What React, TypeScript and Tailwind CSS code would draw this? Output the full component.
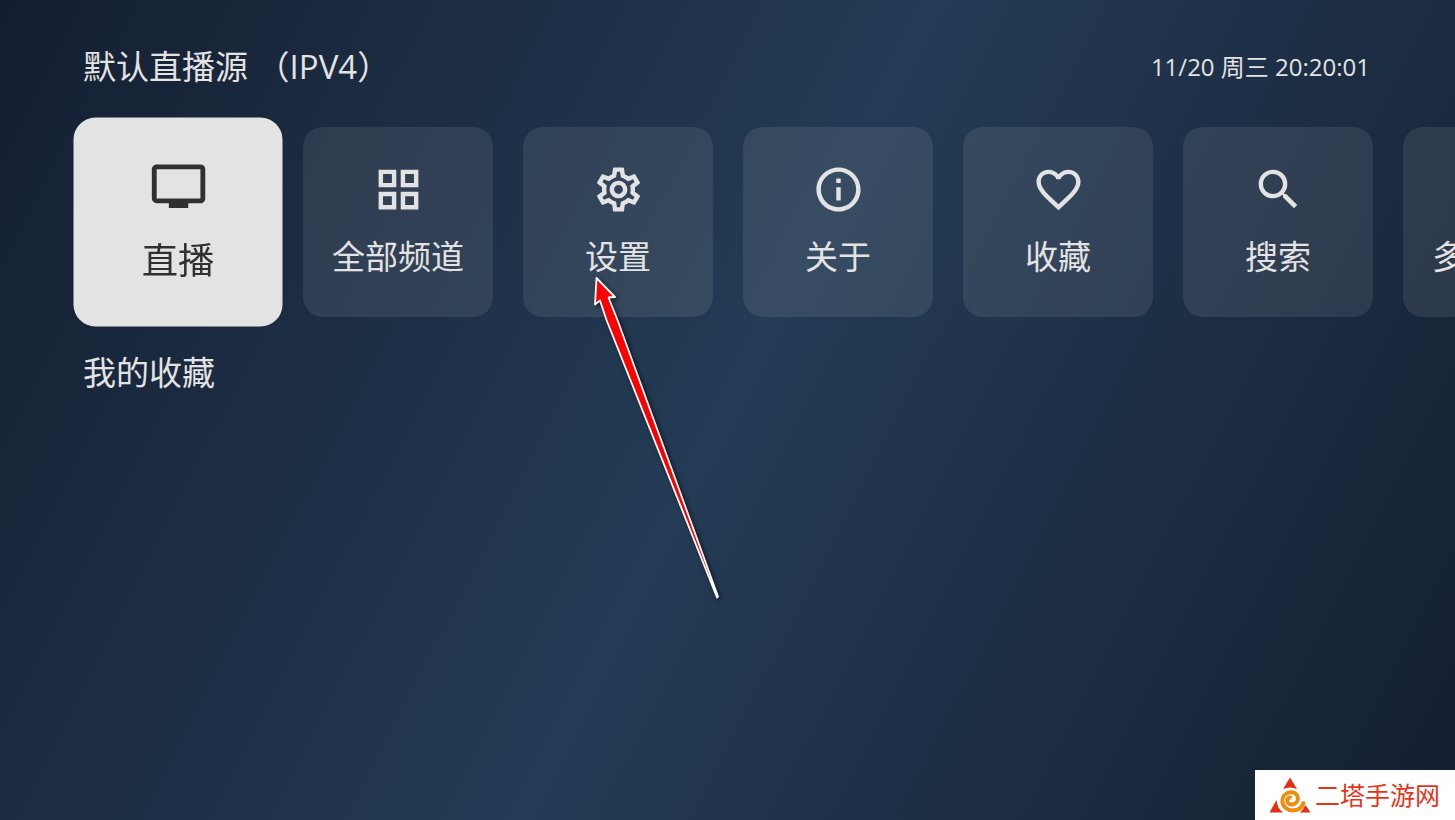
import { useState } from "react";
import type { IconType } from "react-icons";
import {
  MdFavoriteBorder,
  MdGridView,
  MdInfoOutline,
  MdOutlineSettings,
  MdPersonalVideo,
  MdSearch,
  MdViewQuilt,
} from "react-icons/md";
import clsx from "clsx";

type MenuItem = {
  id: string;
  label: string;
  icon: IconType;
};

const menuItems: MenuItem[] = [
  { id: "live", label: "直播", icon: MdPersonalVideo },
  { id: "channels", label: "全部频道", icon: MdGridView },
  { id: "settings", label: "设置", icon: MdOutlineSettings },
  { id: "about", label: "关于", icon: MdInfoOutline },
  { id: "favorites", label: "收藏", icon: MdFavoriteBorder },
  { id: "search", label: "搜索", icon: MdSearch },
  { id: "multiview", label: "多屏同看", icon: MdViewQuilt },
];

function MenuCard({
  item,
  focused,
  onFocus,
}: {
  item: MenuItem;
  focused: boolean;
  onFocus: () => void;
}) {
  const Icon = item.icon;

  return (
    <button
      type="button"
      onFocus={onFocus}
      className={clsx(
        "flex size-[190px] flex-col items-center justify-center gap-4 rounded-[20px] outline-none",
        focused
          ? "scale-110 bg-[#e3e3e3] text-[#303030]"
          : "bg-[#e3e3e3]/10 text-[#e3e3e3]"
      )}
    >
      <Icon size={53} />
      <span className="text-[33px] leading-[50px] whitespace-nowrap">
        {item.label}
      </span>
    </button>
  );
}

// Red pointer that starts below the menu and ends at the settings card
function PointerArrow() {
  return (
    <svg
      width="140"
      height="336"
      viewBox="0 0 140 336"
      className="pointer-events-none absolute top-[143px] left-[63px] drop-shadow-[2px_2px_2px_rgba(0,0,0,0.6)]"
      aria-hidden="true"
    >
      <path
        d="M10.500 8 L29 27 L22.500 27.500 L31.500 50 L132 326.500 L131 327.500 L20.500 50 L14 30.500 L9 34.500 Z"
        fill="#ff0000"
        stroke="#ffffff"
        strokeWidth="1.800"
        strokeLinejoin="round"
      />
    </svg>
  );
}

function SiteBadge() {
  return (
    <div className="absolute right-0 bottom-0 flex h-[50px] w-[200px] items-center gap-1 bg-white pl-3.5 text-[#e5341a]">
      <svg width="42" height="38" viewBox="0 0 42 38" aria-hidden="true">
        <path d="M21 1.500 L28 13 Q21 10 14 13 Z" fill="#e62e12" />
        <path d="M7.500 24 Q8.500 33 14 36.500 L0.500 36.500 Z" fill="#e62e12" />
        <path d="M36.500 29 L41.500 36.500 L31 36.500 Q34.500 33 36.500 29 Z" fill="#e62e12" />
        <path
          d="M22.500 22 C20 20.500 17.800 22.500 18.200 25 C18.700 28 21.500 29 24 28.300 C27.500 27.300 29.300 24.500 28.800 21.500 C28 17.500 24.500 15.800 21 16.300 C16.500 17 13 20.500 13.300 25.500 C13.800 31 18.500 34.500 23.500 34.500 C29.500 34.500 33.500 31.500 35 25.500"
          fill="none"
          stroke="#f08c0a"
          strokeWidth="3.900"
        />
      </svg>
      <span className="text-[25px] leading-[50px] whitespace-nowrap">
        二塔手游网
      </span>
    </div>
  );
}

export default function App() {
  const [focusedId, setFocusedId] = useState<string>("live");

  return (
    <main className="relative min-h-screen overflow-hidden bg-[linear-gradient(117deg,#141e30,#243b55_50%,#141e30)] pt-[42px] font-['Open_Sans','Noto_Sans_CJK_SC',sans-serif] text-[#e3e3e3]">
      <header className="flex items-center justify-between pr-[85px] pl-[83px]">
        <h1 className="text-[33px] leading-[50px]">默认直播源 （IPV4）</h1>
        <time className="text-[24px] leading-[50px]">11/20 周三 20:20:01</time>
      </header>

      {/* Main menu, runs past the right edge */}
      <nav className="mt-[35px] pl-[83px]">
        <ul className="flex gap-[30px]">
          {menuItems.map((item) => (
            <li key={item.id} className="relative shrink-0">
              <MenuCard
                item={item}
                focused={item.id === focusedId}
                onFocus={() => setFocusedId(item.id)}
              />
              {item.id === "settings" && <PointerArrow />}
            </li>
          ))}
        </ul>
      </nav>

      {/* Favorites */}
      <section className="mt-[31px] px-[83px]">
        <h2 className="text-[33px] leading-[50px]">我的收藏</h2>
      </section>

      <SiteBadge />
    </main>
  );
}
